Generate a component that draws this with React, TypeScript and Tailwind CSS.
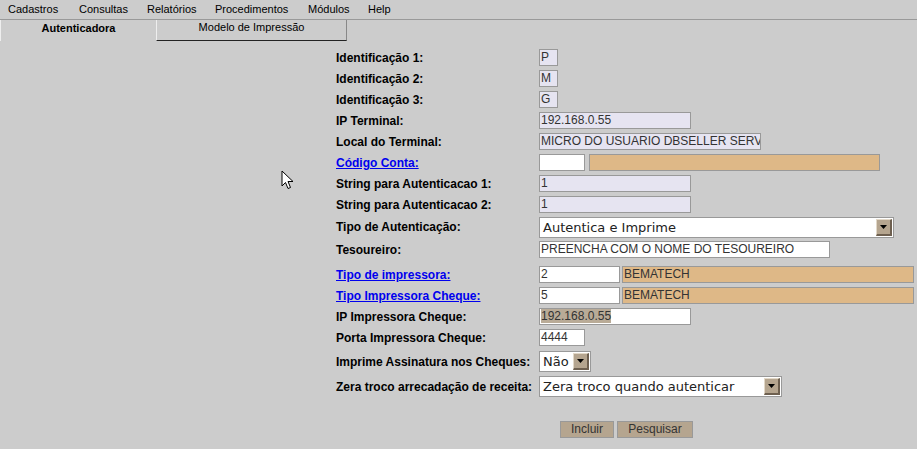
import React from "react";

const Label = ({ children, link }: { children: React.ReactNode; link?: boolean }) => (
  <div className="w-[203px] shrink-0 text-[12px] font-bold leading-[14px]">
    {link ? <span className="text-[#0000ee] underline">{children}</span> : <span className="text-black">{children}</span>}
  </div>
);

const Box = ({
  w,
  bg,
  children,
}: {
  w: string;
  bg: "lav" | "white" | "tan";
  children?: React.ReactNode;
}) => {
  const bgc = bg === "lav" ? "bg-[#e6e4f1]" : bg === "white" ? "bg-white" : "bg-[#deb887]";
  return (
    <div
      className={`${w} ${bgc} h-[17px] shrink-0 border border-[#999999] pl-[1px] text-[12px] leading-[15px] text-[#333333] whitespace-nowrap overflow-hidden`}
    >
      {children}
    </div>
  );
};

const Arrow = () => (
  <div className="absolute right-[1px] top-[1px] bottom-[1px] w-[16px] bg-[#b5a58f] border-t border-l border-[#e2d8c8] border-r-2 border-b-2 border-r-[#6e6050] border-b-[#6e6050] flex items-center justify-center">
    <svg width="7" height="4" viewBox="0 0 7 4">
      <path d="M0 0 H7 L3.5 4 Z" fill="#000" />
    </svg>
  </div>
);

const Select = ({ w, children }: { w: string; children: React.ReactNode }) => (
  <div
    className={`${w} relative h-[21px] shrink-0 bg-white border border-[#999999] pl-[3px] text-[13px] leading-[19px] text-[#222222] whitespace-nowrap overflow-hidden`}
    style={{ fontFamily: '"DejaVu Sans", sans-serif' }}
  >
    {children}
    <Arrow />
  </div>
);

export default function App() {
  const menu: [string, string][] = [
    ["Cadastros", "w-[71px]"],
    ["Consultas", "w-[68px]"],
    ["Relatórios", "w-[68px]"],
    ["Procedimentos", "w-[93px]"],
    ["Módulos", "w-[60px]"],
    ["Help", "w-[40px]"],
  ];
  return (
    <div
      className="relative w-full h-[449px] bg-[#cccccc] overflow-hidden"
      style={{ fontFamily: '"Liberation Sans", Arial, sans-serif' }}
    >
      {/* menu bar */}
      <div className="h-[20px] flex items-center pl-[8px] text-[11px] text-black border-b border-[#999999]">
        {menu.map(([t, w]) => (
          <div key={t} className={`${w} leading-[13px] pb-[1px]`}>
            {t}
          </div>
        ))}
      </div>
      {/* tabs */}
      <div className="flex h-[21px] text-[11px]">
        <div className="w-[156px] border-l border-[#eeeeee] text-center font-bold text-black leading-[13px] pt-[2px]">
          Autenticadora
        </div>
        <div className="w-[191px] border-l border-[#eeeeee] border-r border-r-[#888888] border-b border-b-[#222222] text-center text-black leading-[13px] pt-[1px]">
          Modelo de Impressão
        </div>
      </div>

      {/* form */}
      <div className="pl-[336px] pt-[6px] flex flex-col">
        <div className="h-[21px] flex items-center">
          <Label>Identificação 1:</Label>
          <Box w="w-[19px]" bg="lav">P</Box>
        </div>
        <div className="h-[21px] flex items-center">
          <Label>Identificação 2:</Label>
          <Box w="w-[19px]" bg="lav">M</Box>
        </div>
        <div className="h-[21px] flex items-center">
          <Label>Identificação 3:</Label>
          <Box w="w-[19px]" bg="lav">G</Box>
        </div>
        <div className="h-[21px] flex items-center">
          <Label>IP Terminal:</Label>
          <Box w="w-[152px]" bg="lav">192.168.0.55</Box>
        </div>
        <div className="h-[21px] flex items-center">
          <Label>Local do Terminal:</Label>
          <Box w="w-[222px]" bg="lav">MICRO DO USUARIO DBSELLER SERVIDOR</Box>
        </div>
        <div className="h-[21px] flex items-center">
          <Label link>Código Conta:</Label>
          <Box w="w-[46px]" bg="white" />
          <div className="w-[4px]" />
          <Box w="w-[291px]" bg="tan" />
        </div>
        <div className="h-[21px] flex items-center">
          <Label>String para Autenticacao 1:</Label>
          <Box w="w-[152px]" bg="lav">1</Box>
        </div>
        <div className="h-[21px] flex items-center">
          <Label>String para Autenticacao 2:</Label>
          <Box w="w-[152px]" bg="lav">1</Box>
        </div>
        <div className="h-[24px] flex items-center">
          <Label>Tipo de Autenticação:</Label>
          <Select w="w-[355px]">Autentica e Imprime</Select>
        </div>
        <div className="h-[21px] flex items-center">
          <Label>Tesoureiro:</Label>
          <Box w="w-[291px]" bg="white">PREENCHA COM O NOME DO TESOUREIRO</Box>
        </div>
        <div className="h-[21px] mt-[4px] flex items-center">
          <Label link>Tipo de impressora:</Label>
          <Box w="w-[81px]" bg="white">2</Box>
          <div className="w-[2px]" />
          <Box w="w-[292px]" bg="tan">BEMATECH</Box>
        </div>
        <div className="h-[21px] flex items-center">
          <Label link>Tipo Impressora Cheque:</Label>
          <Box w="w-[81px]" bg="white">5</Box>
          <div className="w-[2px]" />
          <Box w="w-[292px]" bg="tan">BEMATECH</Box>
        </div>
        <div className="h-[21px] flex items-center">
          <Label>IP Impressora Cheque:</Label>
          <Box w="w-[152px]" bg="white">
            <span className="bg-[#b9ab97]">192.168.0.55</span>
          </Box>
        </div>
        <div className="h-[21px] flex items-center">
          <Label>Porta Impressora Cheque:</Label>
          <Box w="w-[46px]" bg="white">4444</Box>
        </div>
        <div className="h-[27px] flex items-center">
          <Label>Imprime Assinatura nos Cheques:</Label>
          <Select w="w-[52px]">Não</Select>
        </div>
        <div className="h-[23px] flex items-center">
          <Label>Zera troco arrecadação de receita:</Label>
          <Select w="w-[243px]">Zera troco quando autenticar</Select>
        </div>
        <div className="mt-[23px] pl-[224px] flex gap-[3px]">
          <div className="w-[54px] h-[17px] bg-[#b5a58f] border border-[#999999] text-center text-[12px] leading-[15px] text-[#333333]">
            Incluir
          </div>
          <div className="w-[76px] h-[17px] bg-[#b5a58f] border border-[#999999] text-center text-[12px] leading-[15px] text-[#333333]">
            Pesquisar
          </div>
        </div>
      </div>

      {/* mouse cursor */}
      <svg className="absolute left-[281px] top-[170px]" width="13" height="20" viewBox="0 0 13 20">
        <path
          d="M1 1 L1 16 L4.5 12.5 L7 18.5 L9.5 17.5 L7 11.5 L12 11.5 Z"
          fill="#ffffff"
          stroke="#000000"
          strokeWidth="1"
          strokeLinejoin="miter"
        />
      </svg>
    </div>
  );
}
